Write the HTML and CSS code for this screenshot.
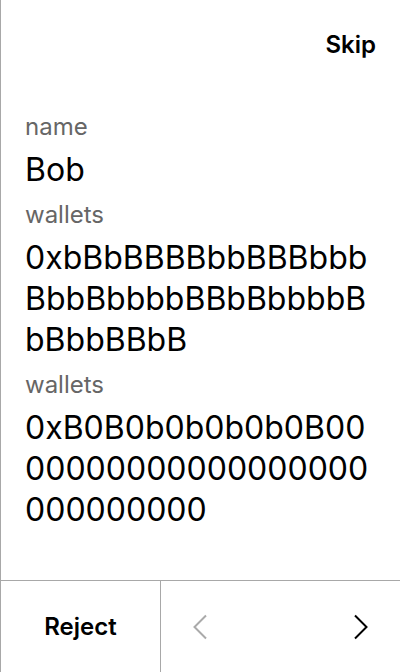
FILE: index.html
```html
<!DOCTYPE html>
<html>
<head>
<meta charset="utf-8">
<link rel="stylesheet" href="styles.css">
</head>
<body>
<div class="screen">
  <header class="top">
    <button class="skip">Skip</button>
  </header>
  <main class="fields">
    <div class="label">name</div>
    <div class="value">Bob</div>
    <div class="label">wallets</div>
    <div class="value">0xbBbBBBBbbBBBbbbBbbBbbbbBBbBbbbbBbBbbBBbB</div>
    <div class="label">wallets</div>
    <div class="value">0xB0B0b0b0b0b0B0000000000000000000000000000</div>
  </main>
  <footer class="bar">
    <button class="reject">Reject</button>
    <div class="nav">
      <button class="arrow disabled" aria-label="Previous">
        <svg width="16" height="26" viewBox="0 0 16 26"><path d="M14 1.5 L2.5 13 L14 24.5" fill="none" stroke="currentColor" stroke-width="2"/></svg>
      </button>
      <button class="arrow" aria-label="Next">
        <svg width="16" height="26" viewBox="0 0 16 26"><path d="M2 1.5 L13.5 13 L2 24.5" fill="none" stroke="currentColor" stroke-width="2"/></svg>
      </button>
    </div>
  </footer>
</div>
</body>
</html>
```
FILE: styles.css
```css
* { box-sizing: border-box; }
html, body { margin: 0; padding: 0; background: #fff; }
body { font-family: Inter, "Noto Sans", sans-serif; color: #000; }
.screen {
  width: 400px;
  height: 672px;
  border-left: 1px solid #a8a8a8;
  display: flex;
  flex-direction: column;
}
button {
  font-family: inherit;
  background: none;
  border: 0;
  padding: 0;
  color: inherit;
  cursor: pointer;
}
.top {
  height: 88px;
  display: flex;
  align-items: center;
  justify-content: flex-end;
  padding-right: 24px;
}
.skip { font-size: 24px; font-weight: 600; }
.fields {
  flex: 1;
  padding: 24px 24px 0 24px;
  display: flex;
  flex-direction: column;
  gap: 8px;
}
.label { font-size: 24px; line-height: 29px; color: #666; }
.value { font-size: 32px; line-height: 41px; margin-bottom: 2px; word-break: break-all; }
.bar {
  height: 92px;
  border-top: 1px solid #a8a8a8;
  display: flex;
}
.reject {
  width: 160px;
  font-size: 24px;
  font-weight: 600;
  border-right: 1px solid #a8a8a8;
}
.nav {
  flex: 1;
  display: flex;
  justify-content: space-between;
  align-items: center;
  padding: 0 31px 0 31px;
}
.arrow { display: flex; color: #000; }
.arrow.disabled { color: #aaa; }
```
